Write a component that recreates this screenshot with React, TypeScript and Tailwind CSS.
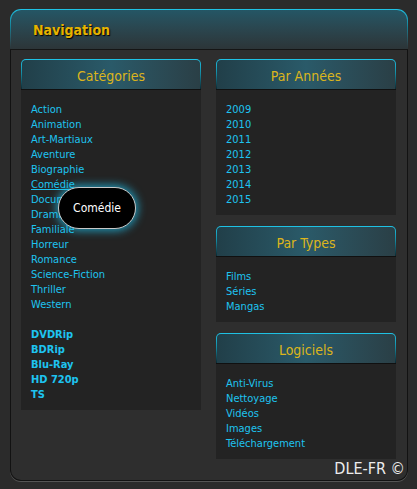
import * as React from "react";

const font = { fontFamily: "Tahoma, 'DejaVu Sans Condensed', 'DejaVu Sans', sans-serif" };

const categories = [
  "Action",
  "Animation",
  "Art-Martiaux",
  "Aventure",
  "Biographie",
  "Comédie",
  "Documentaire",
  "Dramatique",
  "Familiale",
  "Horreur",
  "Romance",
  "Science-Fiction",
  "Thriller",
  "Western",
];
const formats = ["DVDRip", "BDRip", "Blu-Ray", "HD 720p", "TS"];
const years = ["2009", "2010", "2011", "2012", "2013", "2014", "2015"];
const types = ["Films", "Séries", "Mangas"];
const software = ["Anti-Virus", "Nettoyage", "Vidéos", "Images", "Téléchargement"];

function Panel({ title, children }: { title: string; children: React.ReactNode }) {
  return (
    <div className="w-[180px]">
      {/* fading cyan frame around the heading */}
      <div className="rounded-t-[5px] bg-gradient-to-b from-[#1fc3e6] via-[#14879e] to-[#0a2a33] px-px pt-px">
        <div className="flex h-[29px] items-center justify-center rounded-t-[4px] bg-gradient-to-r from-[#213f49] via-[#2a5a69] to-[#2a3f46] pt-[3px] text-[14px] text-[#dcb51c]">
          {title}
        </div>
      </div>
      <div className="h-px bg-[#101010]" />
      <div className="bg-[#232323] px-[10px] pb-[8px] pt-[12px] text-[11px] leading-[15px]">{children}</div>
    </div>
  );
}

function LinkItem({ label, bold, hover }: { label: string; bold?: boolean; hover?: boolean }) {
  return (
    <div className={`text-[#1ec3f0] ${bold ? "font-bold" : ""} ${hover ? "underline" : ""}`}>{label}</div>
  );
}

export default function App() {
  return (
    <div className="min-h-[489px] bg-[#2b2b2b] pl-[10px] pr-[9px] pt-[9px]" style={font}>
      <div className="w-[398px]">
        <div className="rounded-t-[11px] bg-gradient-to-b from-[#1fc3e6] via-[#15788c] to-[#2b3336] px-px pt-px">
          <div className="flex h-[39px] items-center rounded-t-[10px] bg-gradient-to-b from-[#245665] to-[#2c3538] pl-[22px] pt-[2px]">
            <span className="text-[14px] font-bold text-[#e6b300] [text-shadow:1px_1px_1px_#000]">Navigation</span>
          </div>
        </div>
        <div className="h-px bg-[#151515]" />
        <div className="rounded-b-[11px] border-x border-b border-[#121212] bg-[#2e2e2e] pb-[2px] shadow-[0_1px_0_#555]">
          <div className="flex gap-[15px] pl-[10px] pt-[9px]">
            <div className="relative">
              <Panel title="Catégories">
                {categories.map((c) => (
                  <LinkItem key={c} label={c} hover={c === "Comédie"} />
                ))}
                <div className="h-[15px]" />
                {formats.map((f) => (
                  <LinkItem key={f} label={f} bold />
                ))}
              </Panel>
              <div className="absolute left-[37px] top-[128px] flex h-[42px] w-[78px] items-center justify-center rounded-full border border-[#c8c8c8] bg-black text-[12px] text-white shadow-[0_0_8px_2px_rgba(30,195,240,0.7)]">
                Comédie
              </div>
            </div>
            <div className="flex flex-col gap-[11px]">
              <Panel title="Par Années">
                {years.map((y) => (
                  <LinkItem key={y} label={y} />
                ))}
              </Panel>
              <Panel title="Par Types">
                {types.map((t) => (
                  <LinkItem key={t} label={t} />
                ))}
              </Panel>
              <Panel title="Logiciels">
                {software.map((s) => (
                  <LinkItem key={s} label={s} />
                ))}
              </Panel>
            </div>
          </div>
          <div className="pr-[2px] text-right text-[16px] leading-[19px] text-[#ececec]">DLE-FR ©</div>
        </div>
      </div>
    </div>
  );
}
